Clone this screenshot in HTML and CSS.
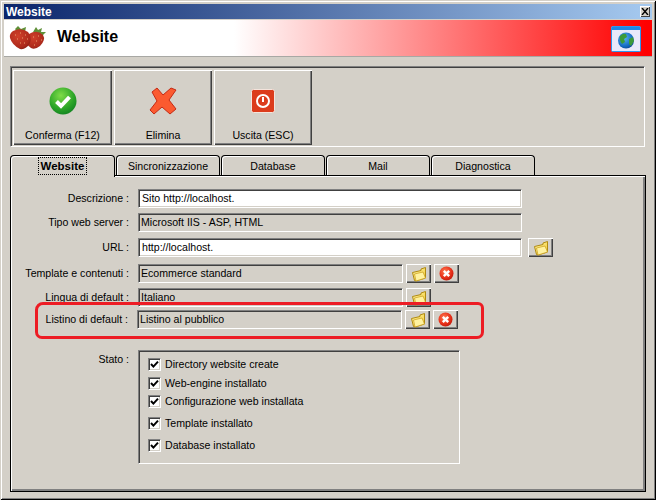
FILE: index.html
```html
<!DOCTYPE html>
<html lang="it">
<head>
<meta charset="utf-8">
<title>Website</title>
<link rel="stylesheet" href="styles.css">
</head>
<body>
<svg class="defs" width="0" height="0" aria-hidden="true">
  <defs>
    <linearGradient id="fold" x1="0" y1="0" x2="1" y2="1"><stop offset="0" stop-color="#fff6a8"/><stop offset="1" stop-color="#f2c830"/></linearGradient>
    <radialGradient id="redball" cx=".4" cy=".35" r=".75"><stop offset="0" stop-color="#ff7a50"/><stop offset=".6" stop-color="#e8301a"/><stop offset="1" stop-color="#b81408"/></radialGradient>
    <radialGradient id="greenball" cx=".42" cy=".3" r=".8"><stop offset="0" stop-color="#7fdc48"/><stop offset=".6" stop-color="#2ca528"/><stop offset="1" stop-color="#0c7a20"/></radialGradient>
    <radialGradient id="earth" cx=".4" cy=".35" r=".75"><stop offset="0" stop-color="#58b4ee"/><stop offset=".7" stop-color="#1468c0"/><stop offset="1" stop-color="#0c3e86"/></radialGradient>
    <radialGradient id="berry" cx=".4" cy=".35" r=".8"><stop offset="0" stop-color="#d0402a"/><stop offset=".7" stop-color="#ad2a1c"/><stop offset="1" stop-color="#701810"/></radialGradient>
    <symbol id="folder" viewBox="0 0 16 16">
      <path d="M1.5 6.5 L10 4.5 L10 3 L14.5 1.5 L14.5 12 L5 15 L3.5 14.5 Z" fill="url(#fold)" stroke="#b08a10" stroke-width="1"/>
      <path d="M5 15 L3.5 8 L12 6 L14.5 12 Z" fill="#fff2a0" stroke="#c89c18" stroke-width=".7"/>
    </symbol>
    <symbol id="cancel" viewBox="0 0 15 15">
      <circle cx="7.5" cy="7.5" r="7" fill="url(#redball)"/>
      <path d="M4.8 4.8 L10.2 10.2 M10.2 4.8 L4.8 10.2" stroke="#fff" stroke-width="2.4"/>
    </symbol>
    <symbol id="tick" viewBox="0 0 9 9">
      <path d="M1 4 L3.4 6.6 L8 1.6" fill="none" stroke="#000" stroke-width="2"/>
    </symbol>
  </defs>
</svg>

<div class="window">
  <div class="titlebar">
    <span class="title-text">Website</span>
    <span class="close"><svg width="8" height="7" viewBox="0 0 8 7"><path d="M1 0 L7 7 M7 0 L1 7" stroke="#000" stroke-width="1.4"/></svg></span>
  </div>

  <div class="banner">
    <svg class="berries" width="38" height="24" viewBox="0 0 38 24">
      <path d="M24 6 L27 1 L29 4 L33 2 L32 6 L37 6 L33 10 Z" fill="#5f9038"/>
      <path d="M20 8 Q28 3 34 9 Q37 14 31 20 Q26 24 22 22 Q16 18 18 12 Z" fill="url(#berry)"/>
      <path d="M6 3 L9 0 L12 3 L17 1 L16 6 L8 6 Z" fill="#5f9038"/>
      <path d="M4 5 Q12 1 19 6 Q23 11 21 17 Q17 24 11 23 Q3 19 1 12 Q0 8 4 5 Z" fill="url(#berry)"/>
      <path d="M6 9h1M11 7h1M16 9h1M8 13h1M13 12h1M18 13h1M11 17h1M15 17h1M24 11h1M29 10h1M27 15h1M32 14h1M25 19h1" stroke="#e8a070" stroke-width="1"/>
    </svg>
    <span class="banner-title">Website</span>
    <svg class="globe" width="30" height="26" viewBox="0 0 30 26">
      <rect x=".5" y=".5" width="29" height="25" rx="1" fill="#e8e8fa" stroke="#2e96ee"/>
      <rect x="1" y="1" width="28" height="3" fill="#1e88e8"/>
      <circle cx="15" cy="14.5" r="8" fill="url(#earth)"/>
      <path d="M9 10 Q12 7 15 8 L16 11 L13 13 L14 16 L11 18 Q8 14 9 10 Z M18 13 L22 11 L23 15 L20 20 L18 18 Z" fill="#3c9a38"/>
    </svg>
  </div>

  <div class="toolbar">
    <button class="tool" type="button">
      <svg class="tool-icon" width="28" height="28" viewBox="0 0 28 28">
        <circle cx="14" cy="14" r="13.5" fill="url(#greenball)"/>
        <path d="M7.5 14.5 L12 19 L20.5 10" fill="none" stroke="#fff" stroke-width="4"/>
      </svg>
      <span>Conferma (F12)</span>
    </button>
    <button class="tool tool-narrow" type="button">
      <svg class="tool-icon" width="28" height="28" viewBox="0 0 28 28">
        <path d="M3 5 L8 1 L14 8 L22 1 L27 3 L20 13 L27 22 L21 27 L13 20 L5 27 L1 23 L8 14 Z" fill="#fb5a30" stroke="#c42a14"/>
      </svg>
      <span>Elimina</span>
    </button>
    <button class="tool tool-narrow" type="button">
      <svg class="tool-icon" width="24" height="24" viewBox="0 0 24 24">
        <rect x=".5" y=".5" width="23" height="23" rx="2" fill="#dc3c1c" stroke="#f4e4dc"/>
        <circle cx="12" cy="12" r="6" fill="none" stroke="#fff" stroke-width="2"/>
        <path d="M12 8 V13" stroke="#fff" stroke-width="2"/>
      </svg>
      <span>Uscita (ESC)</span>
    </button>
  </div>

  <div class="tabs">
    <div class="tab tab-active"><span class="focus">Website</span></div>
    <div class="tab">Sincronizzazione</div>
    <div class="tab">Database</div>
    <div class="tab">Mail</div>
    <div class="tab">Diagnostica</div>
  </div>

  <div class="panel">
    <div class="form">
      <div class="row">
        <span class="label">Descrizione :</span>
        <span class="field field-wide field-white">Sito http://localhost.</span>
      </div>
      <div class="row">
        <span class="label">Tipo web server :</span>
        <span class="field field-wide">Microsoft IIS - ASP, HTML</span>
      </div>
      <div class="row">
        <span class="label">URL :</span>
        <span class="field field-wide field-white">http://localhost.</span>
        <span class="mini mini-first"><svg width="16" height="16"><use href="#folder"/></svg></span>
      </div>
      <div class="row">
        <span class="label">Template e contenuti :</span>
        <span class="field field-mid">Ecommerce standard</span>
        <span class="mini"><svg width="16" height="16"><use href="#folder"/></svg></span>
        <span class="mini"><svg width="15" height="15"><use href="#cancel"/></svg></span>
      </div>
      <div class="row">
        <span class="label">Lingua di default :</span>
        <span class="field field-mid">Italiano</span>
        <span class="mini"><svg width="16" height="16"><use href="#folder"/></svg></span>
      </div>
      <div class="row row-shift">
        <span class="label">Listino di default :</span>
        <span class="field field-mid">Listino al pubblico</span>
        <span class="mini"><svg width="16" height="16"><use href="#folder"/></svg></span>
        <span class="mini"><svg width="15" height="15"><use href="#cancel"/></svg></span>
      </div>
    </div>

    <div class="status">
      <span class="label status-label">Stato :</span>
      <div class="status-box">
        <div class="check"><span class="box"><svg width="9" height="9"><use href="#tick"/></svg></span>Directory website create</div>
        <div class="check"><span class="box"><svg width="9" height="9"><use href="#tick"/></svg></span>Web-engine installato</div>
        <div class="check"><span class="box"><svg width="9" height="9"><use href="#tick"/></svg></span>Configurazione web installata</div>
        <div class="check"><span class="box"><svg width="9" height="9"><use href="#tick"/></svg></span>Template installato</div>
        <div class="check"><span class="box"><svg width="9" height="9"><use href="#tick"/></svg></span>Database installato</div>
      </div>
    </div>

    <div class="highlight"></div>
  </div>
</div>
</body>
</html>
```

FILE: styles.css
```css
* { box-sizing: border-box; }

html, body {
  margin: 0;
  padding: 0;
  background: #d4d0c8;
}

body {
  width: 656px;
  height: 500px;
  overflow: hidden;
  font-family: "Liberation Sans", Arial, sans-serif;
  font-size: 10.6px;
  color: #000;
}

.defs { position: absolute; }

.window {
  width: 656px;
  height: 500px;
  padding: 4px;
  background: #d4d0c8;
  box-shadow:
    inset 1px 1px 0 #d4d0c8,
    inset -1px -1px 0 #000,
    inset 2px 2px 0 #fff,
    inset -2px -2px 0 #808080;
}

.titlebar {
  height: 15px;
  display: flex;
  align-items: center;
  justify-content: space-between;
  padding: 0 2px;
  background: linear-gradient(90deg, #0a246a, #a6caf0);
}

.title-text {
  color: #fff;
  font-weight: bold;
  font-size: 12px;
}

.close {
  width: 10px;
  height: 11px;
  display: flex;
  align-items: center;
  justify-content: center;
  background: #d4d0c8;
  box-shadow: inset 1px 1px 0 #fff, inset -1px -1px 0 #404040;
}

.banner {
  height: 37px;
  margin-top: 1px;
  display: flex;
  align-items: center;
  padding: 0 11px 0 5px;
  border-bottom: 1px solid #a8a8a4;
  background: linear-gradient(90deg, #fff 0, #fff 230px, #f00 642px);
}

.berries { margin-top: -1px; }

.banner-title {
  margin: -2px 0 0 10px;
  font-size: 16px;
  font-weight: bold;
  flex: 1;
}

.globe { margin-top: 1px; }

.toolbar {
  width: 635px;
  height: 81px;
  margin: 9px 0 0 6px;
  display: flex;
  align-items: flex-start;
  gap: 2px;
  padding: 3px 0 0 2px;
  border: 1px solid;
  border-color: #808080 #fff #fff #808080;
  box-shadow: inset 1px 1px 0 #404040;
}

.tool {
  width: 99px;
  height: 75px;
  padding: 0;
  display: flex;
  flex-direction: column;
  align-items: center;
  border: 0;
  background: #d4d0c8;
  color: #000;
  font: inherit;
  box-shadow:
    inset 1px 1px 0 #fff,
    inset -1px -1px 0 #404040,
    inset -2px -2px 0 #808080;
}

.tool-narrow { width: 98px; }

.tool-icon {
  height: 28px;
  margin-top: 17px;
  flex: none;
}

.tool span {
  margin-top: 13px;
  line-height: 14px;
}

.tabs {
  display: flex;
  gap: 1px;
  height: 20px;
  margin: 8px 0 0 6px;
  position: relative;
  z-index: 1;
}

.tab {
  width: 104px;
  height: 20px;
  display: flex;
  align-items: center;
  justify-content: center;
  border: 1px solid #000;
  border-bottom: 0;
  border-radius: 4px 4px 0 0;
  box-shadow: inset 1px 1px 0 #fff;
  background: #d4d0c8;
}

.tab-active {
  width: 105px;
  height: 22px;
  font-size: 11.5px;
  font-weight: bold;
}

.focus {
  outline: 1px dotted #000;
  padding: 1px 2px;
  margin-bottom: 2px;
  line-height: 14px;
}

.panel {
  position: relative;
  width: 636px;
  height: 317px;
  margin-left: 6px;
  padding: 13px 0 0 1px;
  border: 1px solid #000;
  box-shadow: inset 1px 1px 0 #fff, inset -2px -2px 0 #808080;
}

.form {
  display: grid;
  grid-template-rows: 24px 25px 26px 24px 22px 19px;
}

.row {
  display: flex;
  align-items: flex-start;
  height: 19px;
}

.row-shift { margin-left: -1px; }

.label {
  width: 117px;
  margin-right: 9px;
  flex: none;
  text-align: right;
  line-height: 18px;
  white-space: nowrap;
}

.field {
  height: 19px;
  padding-left: 2px;
  line-height: 16px;
  white-space: nowrap;
  border: 1px solid;
  border-color: #808080 #fff #fff #808080;
  box-shadow: inset 1px 1px 0 #404040, inset -1px -1px 0 #d4d0c8;
}

.field-wide { width: 384px; }
.field-mid { width: 265px; }

.field-white {
  background: #fff;
  padding-left: 3px;
  line-height: 17px;
}

.mini {
  width: 25px;
  height: 19px;
  margin-left: 3px;
  display: flex;
  align-items: center;
  justify-content: center;
  background: #d4d0c8;
  box-shadow:
    inset 1px 1px 0 #fff,
    inset -1px -1px 0 #404040,
    inset -2px -2px 0 #808080;
}

.mini-first { margin-left: 6px; }

.status {
  display: flex;
  align-items: flex-start;
  margin-top: 21px;
}

.status-label {
  margin-top: 0;
}

.status-box {
  width: 322px;
  height: 114px;
  padding: 7px 0 0 9px;
  display: grid;
  grid-template-rows: 19px 18px 22px 22px 13px;
  border: 1px solid;
  border-color: #808080 #fff #fff #808080;
  box-shadow: inset 1px 1px 0 #404040;
}

.check {
  display: flex;
  align-items: flex-start;
  line-height: 13px;
  white-space: nowrap;
}

.box {
  width: 13px;
  height: 13px;
  margin-right: 4px;
  display: flex;
  align-items: center;
  justify-content: center;
  flex: none;
  background: #fff;
  border: 1px solid;
  border-color: #808080 #fff #fff #808080;
  box-shadow: inset 1px 1px 0 #404040, inset -1px -1px 0 #d4d0c8;
}

.highlight {
  position: absolute;
  left: 24px;
  top: 126px;
  width: 449px;
  height: 37px;
  border: 3px solid #ed1c24;
  border-radius: 8px 6px 7px 7px;
  pointer-events: none;
}
```
